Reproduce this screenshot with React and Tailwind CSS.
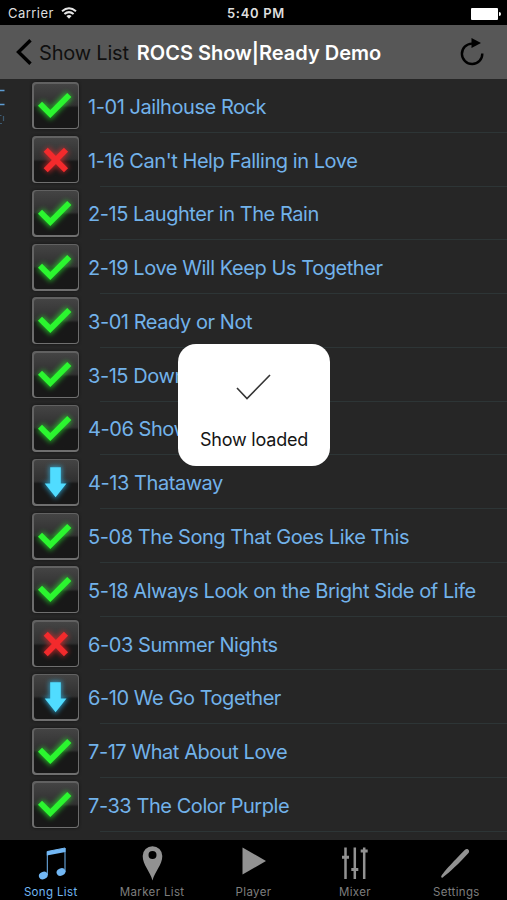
import React from "react";

const SONGS = [
  ["ok", "1-01 Jailhouse Rock"],
  ["fail", "1-16 Can't Help Falling in Love"],
  ["ok", "2-15 Laughter in The Rain"],
  ["ok", "2-19 Love Will Keep Us Together"],
  ["ok", "3-01 Ready or Not"],
  ["ok", "3-15 Down"],
  ["ok", "4-06 Show"],
  ["down", "4-13 Thataway"],
  ["ok", "5-08 The Song That Goes Like This"],
  ["ok", "5-18 Always Look on the Bright Side of Life"],
  ["fail", "6-03 Summer Nights"],
  ["down", "6-10 We Go Together"],
  ["ok", "7-17 What About Love"],
  ["ok", "7-33 The Color Purple"],
];

const GLYPHS = {
  ok: { d: "M8 21.8 L18.3 32 L37.3 13", color: "#2bf62f", width: 5.8 },
  fail: { d: "M13.7 13.8 L34 34.2 M34 13.8 L13.7 34.2", color: "#f32a2c", width: 5.8 },
};

function StatusTile({ kind }) {
  const glyph = GLYPHS[kind];
  return (
    <div className="relative h-[47px] w-[47px] shrink-0 rounded-[4px] bg-linear-to-b from-[#616161] to-[#6f6f6f] p-[1.5px] shadow-[0_0_3px_#111]">
      <div className="h-full w-full rounded-[3px] bg-linear-to-b from-[#444444] from-0% via-[#303030] via-48% to-[#181818] to-54%" />
      <svg viewBox="0 0 47 47" className="absolute left-0 top-0 h-[47px] w-[47px]">
        {glyph ? (
          <>
            <path d={glyph.d} fill="none" stroke={glyph.color} strokeWidth="9" className="opacity-60 blur-[2.5px]" />
            <path d={glyph.d} fill="none" stroke={glyph.color} strokeWidth={glyph.width} />
          </>
        ) : (
          <>
            <path d="M18.2 8.3H28.8V24.5H34.5L23.6 38.3L12.7 24.5H18.2Z" fill="#32bdef" stroke="#32bdef" strokeWidth="2" className="opacity-70 blur-[2.5px]" />
            <path d="M18.2 8.3H28.8V24.5H34.5L23.6 38.3L12.7 24.5H18.2Z" fill="#50dcff" />
          </>
        )}
      </svg>
    </div>
  );
}

function SongRow({ kind, title }) {
  return (
    <li className="relative flex h-[53.77px] items-center pl-8">
      <StatusTile kind={kind} />
      <span className="ml-[9px] mt-[2px] whitespace-nowrap text-[20px] leading-6 tracking-[-0.44px] text-[#72b2ea]">{title}</span>
      <span className="absolute bottom-0 left-[100px] right-0 h-px bg-[#2d3536]" />
    </li>
  );
}

function Tab({ label, active, children }) {
  return (
    <div className={active ? "flex flex-1 flex-col items-center text-[#72b7f4]" : "flex flex-1 flex-col items-center text-[#929292]"}>
      <svg viewBox="0 0 40 40" className="mt-[3px] h-10 w-10">{children}</svg>
      <span className={active ? "mt-px whitespace-nowrap text-[11.5px] leading-4 tracking-[0.35px]" : "mt-px whitespace-nowrap text-[11.5px] leading-4 tracking-[0.35px] text-[#7e7e7e]"}>{label}</span>
    </div>
  );
}

export default function App() {
  return (
    <div className="relative flex h-[900px] w-[507px] flex-col overflow-hidden bg-[#262626] font-['Inter','Liberation_Sans',sans-serif]">
      <div className="grid h-[25px] shrink-0 grid-cols-3 items-center bg-black pl-2 pr-[6px] pt-[2px] text-[13px] text-[#dedede]">
        <div className="flex items-center gap-[7px]">
          <span className="mt-px tracking-[0.45px]">Carrier</span>
          <svg viewBox="0 0 16 12" className="-mt-px h-3 w-4" fill="none" stroke="#e5e5e5" strokeWidth="2">
            <path d="M1 4.2Q8-1.8 15 4.2M3.4 7.1Q8 3.1 12.6 7.1" />
            <path d="M5.4 9Q8 7 10.6 9L8 11.7Z" fill="#e5e5e5" stroke="none" />
          </svg>
        </div>
        <span className="ml-[3px] mt-px whitespace-nowrap text-center font-semibold tracking-[0.7px]">5:40 PM</span>
        <svg viewBox="0 0 30 12" className="h-3 w-[30px] justify-self-end">
          <rect x="0" y="0" width="27" height="12" rx="1" fill="white" />
          <path d="M28 4Q30 4 30 6T28 8Z" fill="white" />
        </svg>
      </div>

      <header className="flex h-[54px] shrink-0 items-center bg-[#575757] pl-4 pr-[22px]">
        <svg viewBox="0 0 16 26" className="h-[26px] w-4" fill="none" stroke="black" strokeWidth="3.4">
          <path d="M14.5 1.2L2.5 13L14.5 24.8" />
        </svg>
        <span className="ml-[7px] mt-[2px] whitespace-nowrap text-[20px] tracking-[-0.2px] text-[#101010]">Show List</span>
        <h1 className="ml-2 mt-[2px] whitespace-nowrap text-[20px] font-semibold text-white">ROCS Show|Ready Demo</h1>
        <svg viewBox="0 0 26 28" className="ml-auto h-7 w-[26px]">
          <path d="M13 5.6A10.2 10.2 0 1 0 23.3 15.5" fill="none" stroke="black" strokeWidth="2.4" />
          <path d="M12.5 0L22 5L12.5 10Z" fill="black" />
        </svg>
      </header>

      <main className="relative h-[761px] shrink-0 overflow-hidden">
        <ul>
          {SONGS.map(([kind, title]) => <SongRow key={title} kind={kind} title={title} />)}
        </ul>
        <svg viewBox="0 0 6 44" className="absolute left-0 top-2 h-11 w-[6px]">
          <path d="M0 3.5H4.5M0 17.5H4.5" stroke="#5d9cd2" strokeWidth="1.5" />
          <path d="M0 28.5H1.5M3.5 29V34M0 36.5H2" stroke="#3d5b72" strokeWidth="1.2" />
        </svg>
      </main>

      <nav className="flex h-[60px] shrink-0 bg-black">
        <Tab label="Song List" active>
          <path d="M16.3 32V8.5L34 5V29" fill="none" stroke="currentColor" strokeWidth="1" />
          <path d="M15.8 8.5L34.5 5V9L15.8 12.4Z" fill="currentColor" />
          <ellipse cx="12.3" cy="32.5" rx="4.5" ry="3.7" transform="rotate(-25 12.3 32.5)" fill="currentColor" />
          <ellipse cx="30" cy="29" rx="4.5" ry="3.7" transform="rotate(-25 30 29)" fill="currentColor" />
        </Tab>
        <Tab label="Marker List">
          <path fillRule="evenodd" d="M20.5 37.5C18 28 10.7 22 10.7 13A9.8 9.8 0 0 1 30.3 13C30.3 22 23 28 20.5 37.5ZM20.5 8A4 4 0 1 0 20.5 16A4 4 0 1 0 20.5 8Z" fill="currentColor" />
        </Tab>
        <Tab label="Player"><path d="M8.5 4.5L32 18L8.5 31.5Z" fill="currentColor" /></Tab>
        <Tab label="Mixer">
          <path d="M10.5 4.5V36M19.8 4.5V36M29.2 4.5V36" stroke="currentColor" strokeWidth="2.5" />
          <path d="M7 14.3H14M16.3 26.5H23.3M25.7 8H32.7" stroke="currentColor" strokeWidth="3" />
        </Tab>
        <Tab label="Settings">
          <path d="M5.2 34C5 31.5 17 19 28.7 7C31 4.7 34.3 7.2 32.7 9.8C24.5 19 12 31 7.8 33.4Q6 35.5 5.2 34Z" fill="currentColor" />
        </Tab>
      </nav>

      <div className="absolute left-[178px] top-[344px] flex h-[122px] w-[152px] flex-col items-center rounded-[18px] bg-white pt-[29px]">
        <svg viewBox="0 0 36 28" className="h-7 w-9" fill="none" stroke="#353535" strokeWidth="1.6">
          <path d="M1 15L11 25.5L34 2" />
        </svg>
        <span className="mt-[27px] whitespace-nowrap text-[18px] leading-6 tracking-[-0.2px] text-[#151515]">Show loaded</span>
      </div>
    </div>
  );
}
